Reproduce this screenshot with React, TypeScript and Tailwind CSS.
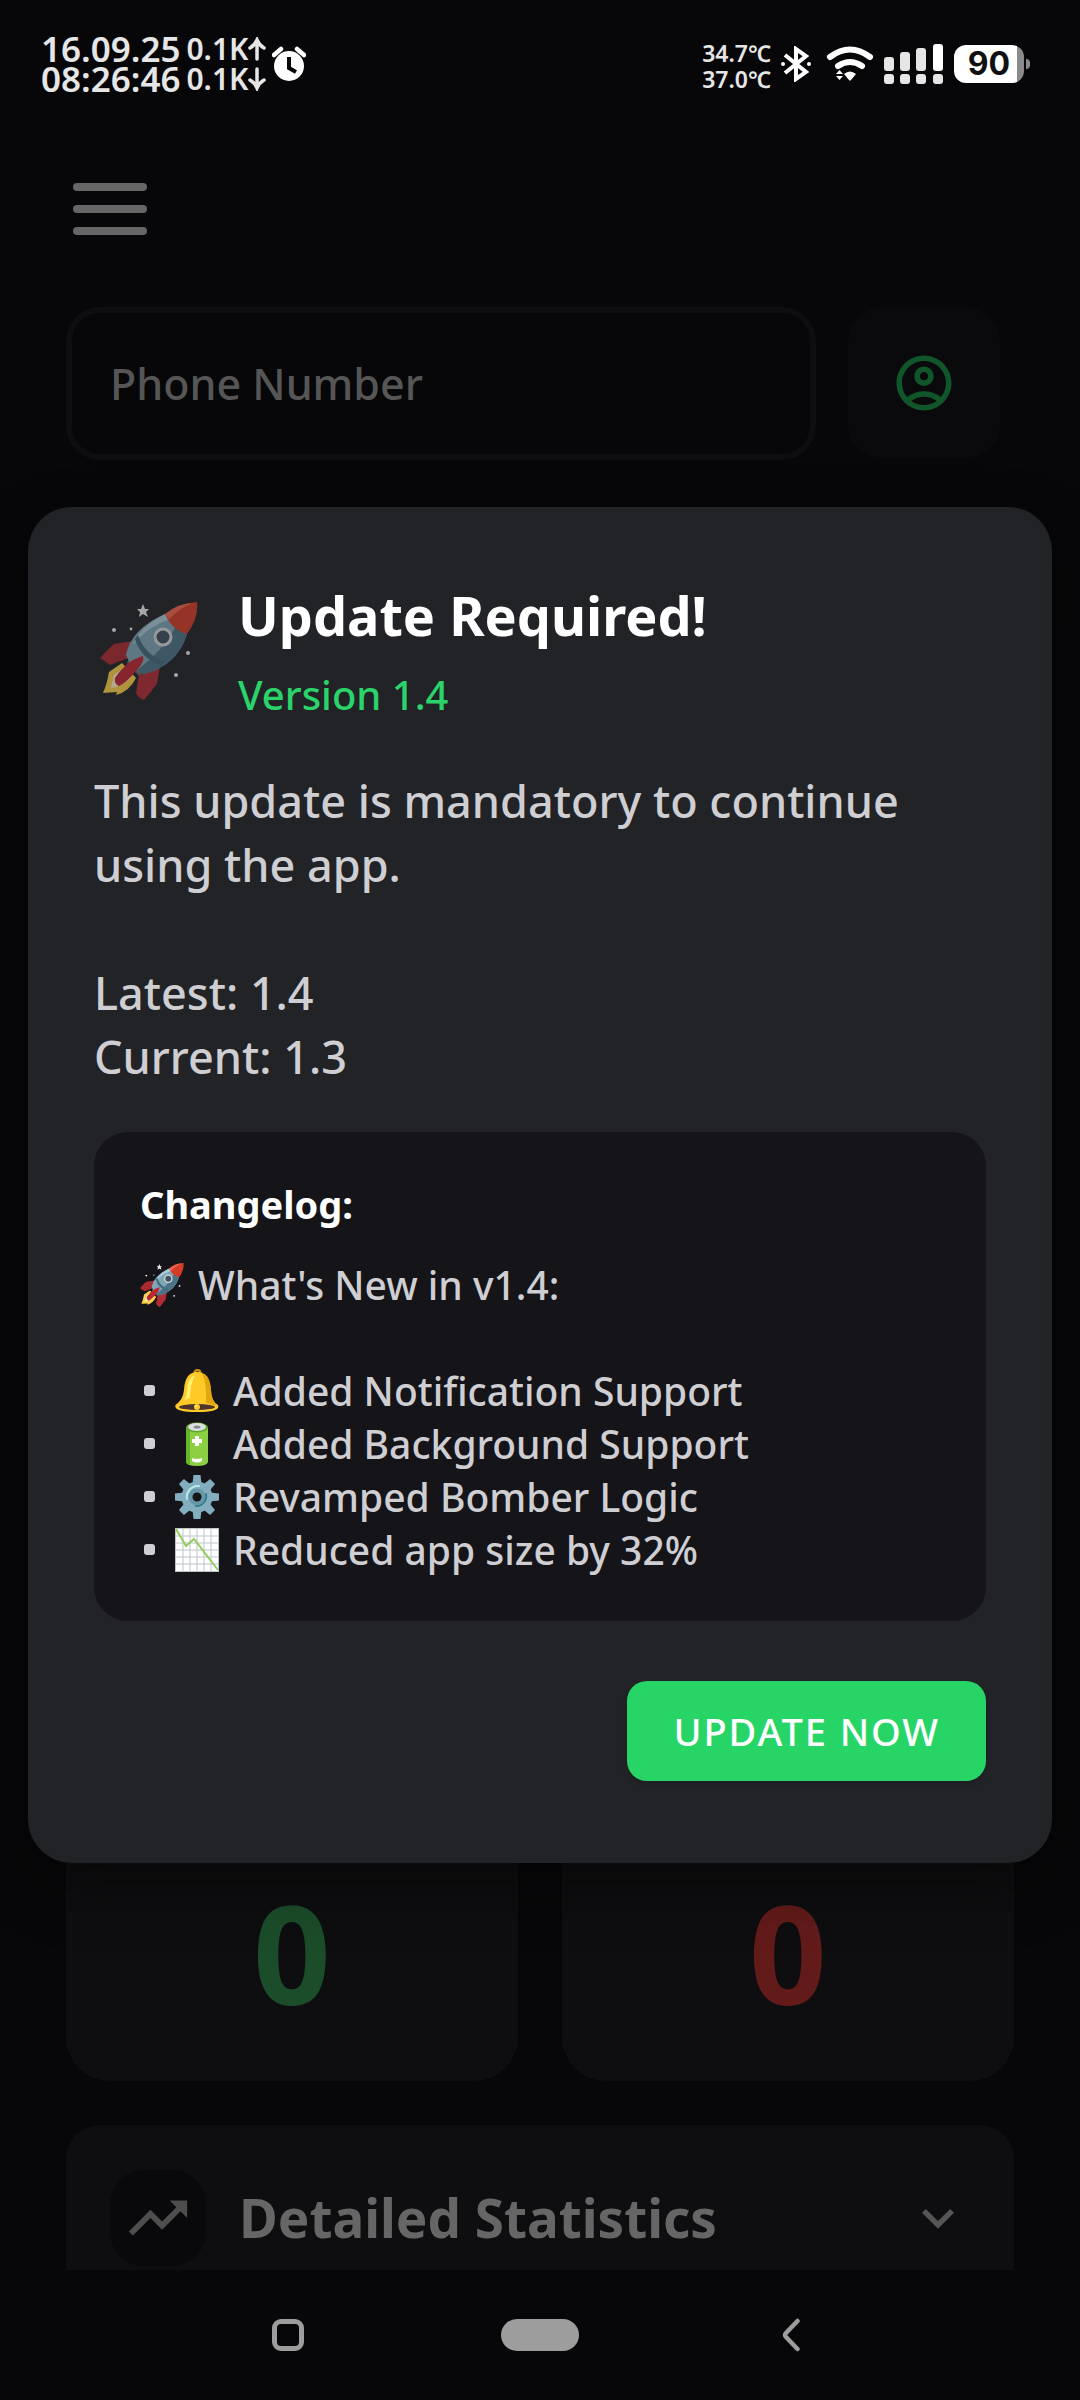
import React from "react";
import {
  MdExpandMore,
  MdOutlineAccountCircle,
  MdTrendingUp,
} from "react-icons/md";

function RocketIcon({ className }: { className: string }) {
  return (
    <svg viewBox="0 0 98 98" className={className} aria-hidden="true">
      <path d="M33 39L14 42Q7 48 0 56L10 63L28 56Z" fill="#a92b31" />
      <path d="M60 64L57 82L44 98Q38 96 36 91L39 73Z" fill="#b02d35" />
      <path d="M22 61L9 70Q7 82 3 91L17 90L16 93Q29 90 36 76Z" fill="#fdd149" />
      <path d="M23 67L14 73L11 86Q24 84 31 75Z" fill="#fff0c9" />
      <path d="M27 61L39 74L43 70L29 56Z" fill="#6b6468" />
      <path d="M65 12Q31 27 26 53Q31 66 43 72Q77 64 87 32Z" fill="#7fa6b5" />
      <path d="M77 22Q64 48 37 68L43 72Q77 64 87 32Z" fill="#4c7487" />
      <path d="M65 12Q38 26 33 43Q48 24 70 17Z" fill="#a8cbd7" />
      <path d="M35 37Q41 57 61 63L65 60Q45 53 38 33Z" fill="#456a7d" />
      <path d="M65 12Q79 1 97 0Q99 16 87 32Q72 28 65 12Z" fill="#d33c26" />
      <path d="M65 12Q79 1 93 1Q76 8 69 18Z" fill="#ef654c" />
      <circle cx="63" cy="35" r="8" fill="#3e515e" stroke="#d6d7da" strokeWidth="3" />
      <path d="M43 54Q45 59 37 68Q25 82 19 84Q14 82 15 76Q27 58 43 54Z" fill="#bd2631" />
      <path d="M43 2L45 7L49 7L46 10L48 15L43 12L39 15L40 10L37 7L41 7Z" fill="#eeeeee" />
      <g fill="#eeeeee">
        <circle cx="14" cy="28" r="2" />
        <circle cx="31" cy="27" r="1.4" />
        <circle cx="88" cy="51" r="2" />
        <circle cx="76" cy="73" r="2" />
      </g>
    </svg>
  );
}

function BellIcon() {
  return (
    <svg viewBox="0 0 44 44" className="size-11 shrink-0" aria-hidden="true">
      <circle cx="22.500" cy="4" r="3" fill="none" stroke="#c68c0b" strokeWidth="2.500" />
      <path d="M9 21Q10 3 22 3Q34 3 36 21Q36 32 43 36Q46 43 22 43Q-2 43 .5 36Q8 31 9 21Z" fill="#ffc928" />
      <path d="M27 4Q35 6 36 21Q36 32 43 37L31 34Q32 14 27 4Z" fill="#e2a610" />
      <path d="M12 21Q13 8 20 6Q15 16 15 29L9 31Q12 27 12 21Z" fill="#fff06f" />
      <ellipse cx="22" cy="38" rx="18" ry="3" fill="#4e342e" />
      <circle cx="22" cy="38" r="3" fill="#ffca28" />
      <circle cx="21" cy="37" r="1" fill="#fff59d" />
    </svg>
  );
}

function BatteryIcon() {
  return (
    <svg viewBox="0 0 44 44" className="size-11 shrink-0" aria-hidden="true">
      <path d="M11 5V40Q12 44 22 44Q32 44 33 40V5Z" fill="#8bcf42" />
      <path d="M11 5V40Q12 43 15 43V5Z" fill="#68b52c" />
      <ellipse cx="22" cy="5.500" rx="11" ry="5" fill="#5fa32a" />
      <ellipse cx="22" cy="5" rx="9" ry="4" fill="#dcdfe0" />
      <ellipse cx="22" cy="5" rx="3.500" ry="1.600" fill="#82898c" />
      <path d="M20 14H24V17H27V21H24V24H20V21H17V17H20Z" fill="#fff" />
      <path d="M17 36Q22 38 27 36V39Q22 42 17 39Z" fill="#fff" />
    </svg>
  );
}

function GearIcon() {
  return (
    <svg viewBox="0 0 44 44" className="size-11 shrink-0" aria-hidden="true">
      <g fill="#82aec0">
        <circle cx="22" cy="22" r="15.500" />
        {[0, 45, 90, 135, 180, 225, 270, 315].map((a) => (
          <path key={a} d="M18.500 0H25.500L26.500 9H17.500Z" transform={`rotate(${a} 22 22)`} />
        ))}
      </g>
      <path d="M12 24A11 11 0 0 1 24 11" fill="none" stroke="#b9e4ea" strokeWidth="2" strokeLinecap="round" />
      <path d="M31 19A10 10 0 0 1 21 31" fill="none" stroke="#2f7889" strokeWidth="2" strokeLinecap="round" />
      <circle cx="22" cy="22" r="6.500" fill="#151419" stroke="#6796a8" strokeWidth="4" />
    </svg>
  );
}

function ChartIcon() {
  return (
    <svg viewBox="0 0 44 44" className="size-11 shrink-0" aria-hidden="true">
      <rect width="44" height="44" fill="#fff" />
      <path
        d="M.5 0V44M8 0V44M15 0V44M22 0V44M29 0V44M36 0V44M43.500 0V44M0 .5H44M0 8H44M0 15H44M0 22H44M0 29H44M0 36H44M0 43.500H44"
        stroke="#bcc5ca"
        strokeWidth="1"
      />
      <path d="M1 1L11 18L19 11L43 42" fill="none" stroke="#93cb5c" strokeWidth="2" />
    </svg>
  );
}

function StatusBar() {
  return (
    <header className="flex h-32 items-center justify-between pr-[50px] pl-[41px] font-semibold text-[#e6e6e6]">
      <div className="flex items-center gap-1.5">
        <div className="text-center text-[35px] leading-[30px]">
          <div>16.09.25</div>
          <div>08:26:46</div>
        </div>
        <div className="text-[30px] leading-[30px]">
          {["up", "down"].map((dir) => (
            <div key={dir} className="flex items-center">
              0.1K
              <svg viewBox="0 0 18 24" className="h-6 w-[18px]" fill="none" stroke="currentColor" strokeWidth="3.500" strokeLinecap="round">
                {dir === "up" ? (
                  <path d="M9 22V3M2 11Q7 8 9 3Q11 8 16 11" />
                ) : (
                  <path d="M9 2V21M2 13Q7 16 9 21Q11 16 16 13" />
                )}
              </svg>
            </div>
          ))}
        </div>
        <svg viewBox="0 0 34 36" className="h-9 w-[34px]" aria-label="Alarm">
          <circle cx="17" cy="20" r="15" fill="#fff" />
          <path d="M2 9L9 3M25 3L32 9" stroke="#fff" strokeWidth="4.500" strokeLinecap="round" />
          <path d="M17 11V22L24 26" fill="none" stroke="#070709" strokeWidth="4" />
        </svg>
      </div>
      <div className="flex items-center">
        <div className="mr-2.5 pt-1 text-right text-[23px] leading-[26px]">
          <div>34.7℃</div>
          <div>37.0℃</div>
        </div>
        <svg viewBox="0 0 30 36" className="mr-[15px] h-9 w-[30px]" aria-label="Bluetooth">
          <path d="M4 9L25 26L15 33V3L25 10L4 27" fill="none" stroke="#fff" strokeWidth="4" />
          <circle cx="2" cy="18" r="2" fill="#fff" />
          <circle cx="28" cy="18" r="2" fill="#fff" />
        </svg>
        <svg viewBox="0 0 48 36" className="mr-2.5 h-9 w-12" aria-label="Wi-Fi">
          <g fill="none" stroke="#fff" strokeWidth="6" strokeLinecap="round">
            <path d="M4 11Q24 -4 44 11" />
            <path d="M12 20Q24 12 36 20" />
          </g>
          <path d="M18 28Q24 23 30 28L25 34Q24 35.500 23 34Z" fill="#fff" />
          <path d="M10 28L13.500 24L17 28ZM10 30H17L13.500 34Z" fill="#fff" />
        </svg>
        <svg viewBox="0 0 60 42" className="mr-2.5 h-[42px] w-[60px]" fill="#e6e6e6" aria-label="Signal">
          <rect x="0" y="14" width="10" height="14" rx="3" />
          <rect x="16" y="9" width="10" height="19" rx="3" />
          <rect x="32" y="5" width="10" height="23" rx="3" />
          <rect x="49" y="1" width="10" height="27" rx="3" fill="#fff" />
          <rect x="0" y="31" width="10" height="10" rx="3" />
          <rect x="16" y="31" width="10" height="10" rx="3" />
          <rect x="32" y="31" width="10" height="10" rx="3" />
          <rect x="49" y="31" width="10" height="10" rx="3" />
        </svg>
        <div className="flex items-center gap-0.5">
          <div className="flex h-[38px] w-[70px] items-center justify-center rounded-xl bg-[linear-gradient(90deg,#fff_90%,#8a8a8a_90%)] font-['Inter'] text-[32px] leading-[38px] font-bold text-[#101012]">
            90
          </div>
          <div className="h-2.5 w-1 rounded-r-full bg-[#8a8a8a]" />
        </div>
      </div>
    </header>
  );
}

const changes = [
  { icon: <BellIcon />, text: "Added Notification Support" },
  { icon: <BatteryIcon />, text: "Added Background Support" },
  { icon: <GearIcon />, text: "Revamped Bomber Logic" },
  { icon: <ChartIcon />, text: "Reduced app size by 32%" },
];

function UpdateDialog() {
  return (
    <div className="absolute inset-0 flex items-center justify-center px-7 pb-[30px]">
      <section
        role="dialog"
        aria-modal="true"
        aria-labelledby="update-title"
        className="w-full rounded-[44px] bg-[#222327] px-[66px] pt-[70px] pb-[82px] shadow-[0_24px_60px_rgba(0,0,0,0.4)]"
      >
        <div className="flex items-center gap-10 pl-1.5">
          <RocketIcon className="size-[98px] shrink-0 opacity-65" />
          <div>
            <h1 id="update-title" className="text-[54px] leading-[76px] font-bold text-white">
              Update Required!
            </h1>
            <p className="mt-3 text-[40px] leading-[60px] font-medium text-[#2ad46a]">Version 1.4</p>
          </div>
        </div>
        <div className="mt-11 text-[45px] leading-[64px] font-medium text-[#cfced2]">
          <p>This update is mandatory to continue using the app.</p>
          <p className="mt-16">Latest: 1.4</p>
          <p>Current: 1.3</p>
        </div>
        <div className="mt-[43px] rounded-[34px] bg-[#151419] px-[46px] pt-[46px] pb-[45px] text-[39px] leading-[53px] font-medium text-[#cfced2]">
          <h2 className="text-[38px] font-bold text-white">Changelog:</h2>
          <p className="mt-[27px] flex items-center gap-3.5">
            <RocketIcon className="size-11 shrink-0" />
            What's New in v1.4:
          </p>
          <ul className="mt-[53px]">
            {changes.map((c) => (
              <li key={c.text} className="flex items-center gap-3.5 pl-1">
                <span className="mr-1.5 size-[11px] shrink-0 rounded-[3px] bg-[#cfced2]" />
                {c.icon}
                {c.text}
              </li>
            ))}
          </ul>
        </div>
        <div className="mt-[60px] flex justify-end">
          <button className="h-[100px] rounded-[20px] bg-[#27d567] px-[46px] text-[38px] font-medium tracking-wider text-white shadow-md">
            UPDATE NOW
          </button>
        </div>
      </section>
    </div>
  );
}

export default function App() {
  return (
    <div className="relative flex min-h-screen flex-col overflow-hidden bg-[#070709] font-['Noto_Sans',sans-serif]">
      <StatusBar />
      <main className="flex grow flex-col px-[66px]">
        <button aria-label="Menu" className="mt-12 flex w-fit flex-col gap-3.5 p-[7px]">
          <span className="h-2 w-[74px] rounded-full bg-[#666666]" />
          <span className="h-2 w-[74px] rounded-full bg-[#666666]" />
          <span className="h-2 w-[74px] rounded-full bg-[#666666]" />
        </button>
        <div className="mt-[65px] flex gap-8 pr-3.5">
          <input
            type="tel"
            aria-label="Phone Number"
            placeholder="Phone Number"
            className="h-[153px] min-w-0 grow rounded-[34px] border-[6px] border-[#0e0e10] bg-transparent px-[38px] text-[43px] font-medium text-[#565656] placeholder:text-[#565656]"
          />
          <button aria-label="Pick contact" className="flex h-[151px] w-[152px] shrink-0 items-center justify-center rounded-[34px] bg-[#0a0a0c]">
            <MdOutlineAccountCircle className="size-[66px] text-[#11562a]" />
          </button>
        </div>
        <div className="mt-auto grid grid-cols-2 gap-11">
          <div className="flex h-[340px] items-end justify-center rounded-[44px] bg-[#0e0e10] pb-[78px] text-[136px] leading-[100px] font-bold text-[#1b4d2a]">
            0
          </div>
          <div className="flex h-[340px] items-end justify-center rounded-[44px] bg-[#0e0e10] pb-[78px] text-[136px] leading-[100px] font-bold text-[#631b1a]">
            0
          </div>
        </div>
        <button className="mt-11 flex h-[145px] items-center rounded-t-[34px] bg-[#0e0e10] px-11 pt-10 text-left">
          <span className="flex size-24 shrink-0 items-center justify-center rounded-[34px] bg-[#09090b]">
            <MdTrendingUp className="size-[70px] text-[#4e4e4e]" />
          </span>
          <span className="ml-[33px] grow text-[53px] leading-[72px] font-bold text-[#666666]">Detailed Statistics</span>
          <MdExpandMore className="size-16 text-[#555555]" />
        </button>
      </main>
      <UpdateDialog />
      <nav className="relative grid h-[130px] grid-cols-3 items-center px-10">
        <button aria-label="Recents" className="flex justify-center pl-[163px]">
          <span className="size-8 rounded-[9px] border-[5px] border-[#9d9d9d]" />
        </button>
        <button aria-label="Home" className="flex justify-center">
          <span className="h-8 w-[78px] rounded-full bg-[#9d9d9d]" />
        </button>
        <button aria-label="Back" className="flex justify-center pr-[165px]">
          <svg viewBox="0 0 18 34" className="h-[34px] w-[18px]" fill="none" stroke="#9d9d9d" strokeWidth="4.500" strokeLinecap="round" strokeLinejoin="round">
            <path d="M15.500 3L4 15Q2 17 4 19L15.500 31" />
          </svg>
        </button>
      </nav>
    </div>
  );
}
